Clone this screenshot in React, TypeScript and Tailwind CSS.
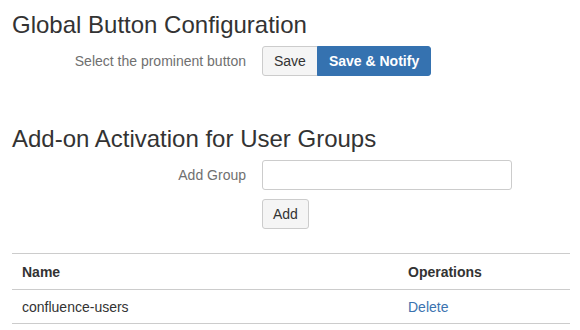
import React from 'react';

const groups = [{ name: 'confluence-users' }];

const App: React.FC = () => {
  return (
    <div className="min-h-screen bg-white px-[12px] pt-[12px] text-[14px] text-[#333] [font-family:'Liberation_Sans',Arial,sans-serif]">
      <h3 className="text-[24px] leading-[26px] font-normal mb-[8px]">Global Button Configuration</h3>
      <div className="flex items-center">
        <label className="w-[234px] text-right text-[#707070] leading-5">Select the prominent button</label>
        <div className="ml-[16px] flex">
          <button className="h-[30px] px-[11px] leading-5 bg-[#f5f5f5] border border-[#ccc] rounded-l-[3px] text-[#333]">
            Save
          </button>
          <button className="h-[30px] -ml-px px-[11px] leading-5 bg-[#3572b0] border border-[#3572b0] rounded-r-[3px] text-white font-bold">
            Save &amp; Notify
          </button>
        </div>
      </div>

      <h3 className="mt-[50px] text-[24px] leading-[26px] font-normal mb-[8px]">Add-on Activation for User Groups</h3>
      <div className="flex items-center">
        <label className="w-[234px] text-right text-[#707070] leading-5">Add Group</label>
        <input className="ml-[16px] h-[30px] w-[250px] border border-[#ccc] rounded-[3px] px-2 outline-none" />
      </div>
      <div className="flex mt-[9px]">
        <div className="w-[250px]" />
        <button className="h-[30px] px-[10px] leading-5 bg-[#f5f5f5] border border-[#ccc] rounded-[3px] text-[#333]">
          Add
        </button>
      </div>

      <table className="mt-[24px] w-[558px] border-collapse">
        <thead>
          <tr className="border-t border-b border-[#ccc]">
            <th className="w-[386px] text-left font-bold pl-[10px] pt-[8px] pb-[7px] leading-5">Name</th>
            <th className="text-left font-bold pl-[10px] pt-[8px] pb-[7px] leading-5">Operations</th>
          </tr>
        </thead>
        <tbody>
          {groups.map(g => (
            <tr key={g.name} className="border-b border-[#ccc]">
              <td className="pl-[10px] pt-[7px] pb-[6px] leading-5">{g.name}</td>
              <td className="pl-[10px] pt-[7px] pb-[6px] leading-5">
                <a className="text-[#3b73af]" href="#">Delete</a>
              </td>
            </tr>
          ))}
        </tbody>
      </table>
    </div>
  );
};

export default App;
